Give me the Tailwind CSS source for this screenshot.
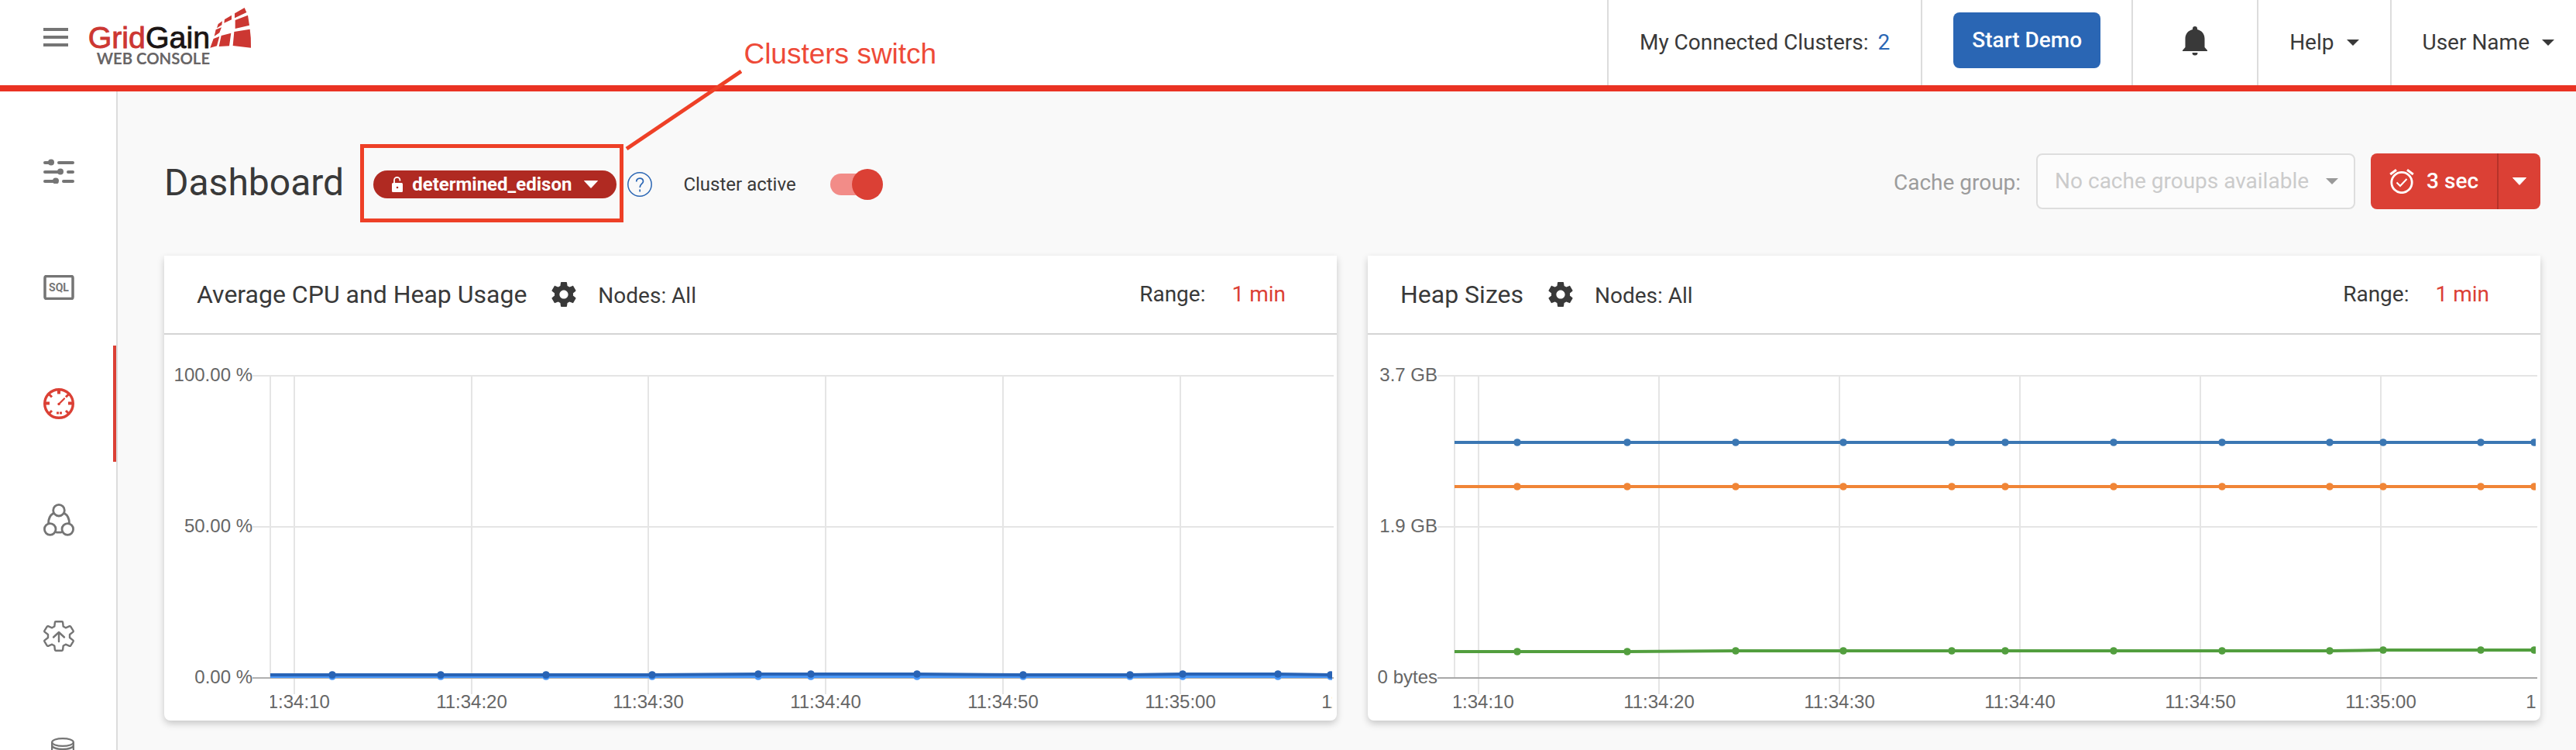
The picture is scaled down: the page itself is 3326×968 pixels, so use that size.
<!DOCTYPE html>
<html lang="en">
<head>
<meta charset="utf-8">
<title>GridGain Web Console</title>
<script src="https://cdn.jsdelivr.net/npm/@tailwindcss/browser@4"></script>
</head>
<body class="bg-[#f9f9f9]">
<div class="relative flex h-screen flex-col overflow-hidden bg-[#f9f9f9] font-['Roboto',sans-serif] text-[28px] leading-9 text-[#393939]">

<header class="flex h-[118px] shrink-0 justify-between border-b-8 border-[#ea3223] bg-white">
  <div class="flex h-24 items-center gap-[26px] pl-14">
    <button type="button" aria-label="Toggle menu" class="flex w-8 flex-col gap-1.5">
      <span class="h-1 bg-[#757575]"></span><span class="h-1 bg-[#757575]"></span><span class="h-1 bg-[#757575]"></span>
    </button>
    <a href="#" aria-label="GridGain Web Console">
      <svg class="h-[76px] w-[210px] overflow-visible" viewBox="42 30 630 228">
        <text x="41" y="185" font-family="Liberation Sans, sans-serif" font-size="118" stroke-width="2.500"><tspan fill="#cc3732" stroke="#cc3732">Grid</tspan><tspan fill="#1a1414" stroke="#1a1414">Gain</tspan></text>
        <text x="74" y="249" font-family="Lato, sans-serif" font-weight="700" font-size="61" fill="#686566">WEB CONSOLE</text>
        <path fill="#cc3732" d="M609 52 647 30 655 48 609 70zM570 75 597 59V76L568 89zM545 93 561 82 559 97 540 109zM611 78 660 59 666 98 611 111zM536 115 558 106 550 127 530 140zM527 150 550 141 540 178 514 185zM557 138 595 128 588 178 548 180zM607 123 668 113Q673 145 672 185L602 177z"/>
      </svg>
    </a>
  </div>
  <div class="flex">
    <div class="flex items-center gap-3 border-l-2 border-[#dcdcdc] px-10">
      <span>My Connected Clusters:</span><a href="#" class="text-[#2a66b4]">2</a>
    </div>
    <div class="border-l-2 border-[#dcdcdc] px-10 pt-4">
      <button type="button" class="h-18 rounded-lg bg-[#2a66b4] px-6 font-medium text-white">Start Demo</button>
    </div>
    <div class="flex items-center border-l-2 border-[#dcdcdc] px-16 pb-1">
      <button type="button" aria-label="Notifications">
        <svg class="h-[38px] w-8" viewBox="0 0 32 38" fill="#393939"><path d="M16 0a3 3 0 0 1 3 3v1c6 1.500 9.500 6 9.500 12v11l3.500 4v1H0v-1l3.500-4V16C3.500 10 7 5.500 13 4V3a3 3 0 0 1 3-3zM12.500 34h7a3.500 3.500 0 0 1-7 0z"/></svg>
      </button>
    </div>
    <div class="flex items-center border-l-2 border-[#dcdcdc] px-10">
      <button type="button" class="flex items-center gap-4">Help
        <svg class="h-2 w-4" viewBox="0 0 16 8" fill="#393939"><path d="M0 0H16L8 8z"/></svg>
      </button>
    </div>
    <div class="flex items-center border-l-2 border-[#dcdcdc] pr-7 pl-10">
      <button type="button" class="flex items-center gap-4">User Name
        <svg class="h-2 w-4" viewBox="0 0 16 8" fill="#393939"><path d="M0 0H16L8 8z"/></svg>
      </button>
    </div>
  </div>
</header>

<div class="flex min-h-0 flex-1">
  <nav aria-label="Main" class="flex w-[152px] shrink-0 flex-col overflow-hidden border-r-2 border-[#dcdcdc] bg-white pt-7 text-[#757575]">
    <a href="#" aria-label="Configuration" class="flex h-[150px] shrink-0 items-center pl-14">
      <svg class="h-8 w-10" viewBox="0 0 40 32" fill="currentColor" stroke="currentColor" stroke-width="4" stroke-linecap="round"><path d="M2 5H10M20 5H38M2 17H22M32 17H38M2 29H16M26 29H38"/><g stroke="none"><circle cx="10" cy="4.500" r="4"/><circle cx="22" cy="16.500" r="4"/><circle cx="16" cy="28.500" r="4"/></g></svg>
    </a>
    <a href="#" aria-label="Queries" class="flex h-[150px] shrink-0 items-center pl-14">
      <svg class="h-8 w-10" viewBox="0 0 40 32"><rect x="2" y="1.500" width="36" height="29" rx="2" fill="none" stroke="currentColor" stroke-width="3.500"/><text x="20" y="21" text-anchor="middle" font-family="Roboto, sans-serif" font-size="14" font-weight="700" fill="currentColor">SQL</text></svg>
    </a>
    <a href="#" aria-label="Dashboard" aria-current="page" class="flex h-[150px] shrink-0 items-center border-r-4 border-[#db4035] pl-14 text-[#db4035]">
      <svg class="h-10 w-10" viewBox="0 0 40 40" fill="none" stroke="currentColor"><circle cx="20" cy="20" r="18.300" stroke-width="3.400"/><path stroke-width="4" d="M20 3V7.500M3 19.500H8M32 19.500H37"/><path stroke-width="3" d="M7.500 8 11 11.500M32.500 8 29 11.500M7.500 32.500 11 29M32.500 32.500 29 29"/><path stroke-width="2.200" stroke-linecap="round" d="M20 20.500 27 13.500"/><circle cx="20" cy="20.500" r="1" stroke-width="1.500" fill="currentColor"/><path stroke-width="3" d="M17 32H20M21 32H24"/></svg>
    </a>
    <a href="#" aria-label="Topology" class="flex h-[150px] shrink-0 items-center pl-14">
      <svg class="h-[42px] w-10" viewBox="0 0 40 42" fill="none" stroke="currentColor" stroke-width="2.800"><circle cx="20" cy="8.700" r="7.300"/><circle cx="8.700" cy="33" r="7.300"/><circle cx="31.300" cy="33" r="7.300"/><path d="M13.500 12C8.500 15 6.300 20 6.500 26M26.500 12C31.500 15 33.700 20 33.500 26M15 36.500 17.500 37.200H22.500L25 36.500"/></svg>
    </a>
    <a href="#" aria-label="Deployment" class="flex h-[150px] shrink-0 items-center pl-14">
      <svg class="h-10 w-10" viewBox="0 0 40 40" fill="none" stroke="currentColor" stroke-width="2.400" stroke-linejoin="round" stroke-linecap="round"><path d="M16 1.300H24Q25 1.300 25.100 2.300L25.700 7.500 28.800 9.300 33.800 7.200Q34.700 6.900 35.200 7.700L38.600 13.200Q39 14 38.300 14.600L34 18V22L38.300 25.400Q39 26 38.600 26.800L35.200 32.300Q34.700 33.100 33.800 32.800L28.800 30.700 25.700 32.500 25.100 37.700Q25 38.700 24 38.700H16Q15 38.700 14.900 37.700L14.300 32.500 11.200 30.700 6.200 32.800Q5.300 33.100 4.800 32.300L1.400 26.800Q1 26 1.700 25.400L6 22V18L1.700 14.600Q1 14 1.400 13.200L4.800 7.700Q5.300 6.900 6.200 7.200L11.200 9.300 14.300 7.500 14.900 2.300Q15 1.300 16 1.300z"/><path d="M20 27V15M13 21.500 20 15 27 21.500"/></svg>
    </a>
    <a href="#" aria-label="Storage" class="flex h-[150px] shrink-0 items-center pl-14">
      <svg class="h-[38px] w-10" viewBox="0 0 40 38" fill="none" stroke="currentColor" stroke-width="2.200"><ellipse cx="25" cy="6" rx="13.900" ry="4.900"/><path d="M11.100 6V32C11.100 38.500 38.900 38.500 38.900 32V6M11.100 10C12 16.500 38 16.500 38.900 10"/></svg>
    </a>
  </nav>

  <main class="flex min-w-0 flex-1 flex-col pt-20 pr-[46px] pl-[60px]">
    <div class="flex h-18 shrink-0 items-center justify-between">
      <div class="flex items-center gap-[38px] pt-1">
        <h1 class="text-[48px] leading-14">Dashboard</h1>
        <div class="flex items-center pt-1 text-[24px] leading-9">
          <div class="relative">
            <button type="button" class="flex h-9 items-center rounded-full bg-[#b02a22] px-6 font-bold text-white">
              <svg class="mr-3 h-5 w-[14px]" viewBox="0 0 14 20"><path d="M3 9V4.500a3.700 3.700 0 0 1 7.400 0V5.500" fill="none" stroke="#fff" stroke-width="1.800"/><rect y="8" width="14" height="12" rx="1.500" fill="#fff"/><circle cx="7" cy="14" r="1.300" fill="#b02a22"/></svg>
              <span>determined_edison</span>
              <svg class="ml-4 h-[10px] w-[18px]" viewBox="0 0 18 10" fill="#fff" stroke="#fff" stroke-linejoin="round"><path d="M.5.5H17.500L9 9.500z"/></svg>
            </button>
            <div class="pointer-events-none absolute -top-[34px] -right-[9px] -bottom-[31px] -left-[17px] border-5 border-[#ee4027]">
              <svg class="absolute -top-[103px] left-full h-[106px] w-[158px]" viewBox="0 0 158 106"><path d="M9 104 157 4" stroke="#ee4027" stroke-width="5"/></svg>
              <span class="absolute -top-[141px] left-full pl-40 font-['Liberation_Sans',sans-serif] text-[37px] leading-10 whitespace-nowrap text-[#ee4a38]">Clusters switch</span>
            </div>
          </div>
          <button type="button" aria-label="Help about clusters" class="ml-[14px]">
            <svg class="block h-8 w-8" viewBox="0 0 32 32" fill="none" stroke="#2a66b4" stroke-width="1.500"><circle cx="16" cy="16" r="15.200"/><path stroke-width="1.700" d="M11.700 12.500C11.700 6.700 20.500 6.700 20.500 12 20.500 15.500 16.200 15 16.200 20M16.200 22.500V25.500"/></svg>
          </button>
          <label class="relative ml-10 flex cursor-pointer items-center gap-11">Cluster active
            <input type="checkbox" checked class="peer sr-only">
            <span class="flex h-7 w-[62px] items-center rounded-full bg-[#f28c88]"><span class="ml-7 h-10 w-10 shrink-0 rounded-full bg-[#db4035]"></span></span>
          </label>
        </div>
      </div>
      <div class="flex items-center">
        <label for="cache" class="pt-1 pr-5 text-[#9c9c9c]">Cache group:</label>
        <div class="relative">
          <select id="cache" disabled class="h-18 w-[412px] appearance-none rounded-lg border-2 border-[#dedede] bg-[#fcfcfc] pl-[22px] text-[#cbcbcb] opacity-100"><option>No cache groups available</option></select>
          <svg class="pointer-events-none absolute top-8 right-[22px] h-2 w-4" viewBox="0 0 16 8" fill="#999"><path d="M0 0H16L8 8z"/></svg>
        </div>
        <div class="ml-5 flex h-18 overflow-hidden rounded-lg bg-[#db4035] text-white">
          <button type="button" class="flex items-center gap-4 border-r-2 border-[#b63229] px-6 font-medium">
            <svg class="h-8 w-8" viewBox="0 0 32 32" fill="none" stroke="#fff"><circle cx="16" cy="17.500" r="13.200" stroke-width="2.800"/><path stroke-width="3" d="M1.200 7 9 1.200M30.800 7 23 1.200"/><path stroke-width="2" d="M9.500 17.500 14 22 22.500 13"/></svg>3 sec
          </button>
          <button type="button" aria-label="Refresh options" class="px-[18px]">
            <svg class="h-[10px] w-[18px]" viewBox="0 0 18 10" fill="#fff" stroke="#fff" stroke-linejoin="round"><path d="M.5.5H17.500L9 9.500z"/></svg>
          </button>
        </div>
      </div>
    </div>

    <div class="mt-[60px] grid shrink-0 grid-cols-2 gap-10">
      <section class="rounded-b-lg bg-white shadow-[0_4px_10px_rgba(0,0,0,0.2)]">
        <div class="flex h-[102px] items-center border-b-2 border-[#d4d4d4] pr-[66px] pl-[42px]">
          <h2 class="text-[32px] leading-10">Average CPU and Heap Usage</h2>
          <button type="button" aria-label="Chart settings" class="ml-8"><svg class="block h-8 w-8" viewBox="2 2 20 20" fill="#393939"><path d="M19.430 12.980c.04-.32.07-.64.07-.98s-.03-.66-.07-.98l2.110-1.650c.19-.15.24-.42.12-.64l-2-3.460c-.12-.22-.39-.3-.61-.22l-2.490 1c-.52-.4-1.080-.73-1.690-.98l-.38-2.650C14.460 2.180 14.250 2 14 2h-4c-.25 0-.46.18-.49.42l-.38 2.650c-.61.25-1.170.59-1.690.98l-2.490-1c-.23-.09-.49 0-.61.22l-2 3.460c-.13.22-.07.49.12.64l2.110 1.650c-.04.32-.07.65-.07.98s.03.66.07.98l-2.110 1.650c-.19.15-.24.42-.12.64l2 3.460c.12.22.39.3.61.22l2.490-1c.52.4 1.080.73 1.690.98l.38 2.650c.03.24.24.42.49.42h4c.25 0 .46-.18.49-.42l.38-2.650c.61-.25 1.170-.59 1.690-.98l2.490 1c.23.09.49 0 .61-.22l2-3.460c.12-.22.07-.49-.12-.64l-2.110-1.650zM12 15.500c-1.930 0-3.500-1.570-3.500-3.500s1.570-3.500 3.500-3.500 3.500 1.570 3.500 3.500-1.570 3.500-3.500 3.500z"/></svg></button>
          <span class="ml-7 pt-1">Nodes: All</span>
          <span class="ml-auto">Range:</span>
          <button type="button" class="ml-[34px] text-[#db4035]">1 min</button>
        </div>
        <svg class="block h-auto w-full" viewBox="0 0 1514 498" font-family="Liberation Sans, sans-serif" font-size="24" fill="#666">
          <defs>
            <clipPath id="cpuClip"><rect x="137" y="0" width="1371" height="498"/></clipPath>
            <marker id="dark" markerUnits="userSpaceOnUse" markerWidth="10" markerHeight="10" refX="5" refY="5"><circle cx="5" cy="5" r="4.800" fill="#2863b5"/></marker>
            <marker id="light" markerUnits="userSpaceOnUse" markerWidth="10" markerHeight="10" refX="5" refY="5"><circle cx="5" cy="5" r="4.800" fill="#4a98f8"/></marker>
          </defs>
          <path d="M114 53H1510M114 248H1510M137 53V443M168 53V464M397 53V464M625 53V464M854 53V464M1083 53V464M1312 53V464" fill="none" stroke="#000" stroke-opacity=".1" stroke-width="2"/>
          <path d="M114 443H1510" stroke="#b0b0b0" stroke-width="2"/>
          <g text-anchor="end"><text x="114" y="60">100.00 %</text><text x="114" y="255">50.00 %</text><text x="114" y="450">0.00 %</text></g>
          <g clip-path="url(#cpuClip)">
            <g text-anchor="middle"><text x="168" y="482">11:34:10</text><text x="397" y="482">11:34:20</text><text x="625" y="482">11:34:30</text><text x="854" y="482">11:34:40</text><text x="1083" y="482">11:34:50</text><text x="1312" y="482">11:35:00</text><text x="1540" y="482">11:35:10</text></g>
            <polyline fill="none" stroke="#4a98f8" stroke-width="4" marker-mid="url(#light)" points="137,441 217,441 357,441 493,441 630,441 767,441 835,441 972,441 1109,441 1247,441 1315,441 1438,441 1506,441 1520,441"/>
            <polyline fill="none" stroke="#2863b5" stroke-width="4" marker-mid="url(#dark)" points="137,439 217,439 357,439 493,439 630,439 767,438 835,438 972,438 1109,439 1247,439 1315,438 1438,438 1506,439 1520,439"/>
          </g>
        </svg>
      </section>

      <section class="rounded-b-lg bg-white shadow-[0_4px_10px_rgba(0,0,0,0.2)]">
        <div class="flex h-[102px] items-center border-b-2 border-[#d4d4d4] pr-[66px] pl-[42px]">
          <h2 class="text-[32px] leading-10">Heap Sizes</h2>
          <button type="button" aria-label="Chart settings" class="ml-8"><svg class="block h-8 w-8" viewBox="2 2 20 20" fill="#393939"><path d="M19.430 12.980c.04-.32.07-.64.07-.98s-.03-.66-.07-.98l2.110-1.650c.19-.15.24-.42.12-.64l-2-3.460c-.12-.22-.39-.3-.61-.22l-2.490 1c-.52-.4-1.080-.73-1.690-.98l-.38-2.650C14.460 2.180 14.250 2 14 2h-4c-.25 0-.46.18-.49.42l-.38 2.650c-.61.25-1.170.59-1.690.98l-2.490-1c-.23-.09-.49 0-.61.22l-2 3.460c-.13.22-.07.49.12.64l2.110 1.650c-.04.32-.07.65-.07.98s.03.66.07.98l-2.110 1.650c-.19.15-.24.42-.12.64l2 3.460c.12.22.39.3.61.22l2.490-1c.52.4 1.080.73 1.690.98l.38 2.650c.03.24.24.42.49.42h4c.25 0 .46-.18.49-.42l.38-2.650c.61-.25 1.170-.59 1.690-.98l2.490 1c.23.09.49 0 .61-.22l2-3.460c.12-.22.07-.49-.12-.64l-2.110-1.650zM12 15.500c-1.930 0-3.500-1.570-3.500-3.500s1.570-3.500 3.500-3.500 3.500 1.570 3.500 3.500-1.570 3.500-3.500 3.500z"/></svg></button>
          <span class="ml-7 pt-1">Nodes: All</span>
          <span class="ml-auto">Range:</span>
          <button type="button" class="ml-[34px] text-[#db4035]">1 min</button>
        </div>
        <svg class="block h-auto w-full" viewBox="0 0 1514 498" font-family="Liberation Sans, sans-serif" font-size="24" fill="#666">
          <defs>
            <clipPath id="heapClip"><rect x="111" y="0" width="1397" height="498"/></clipPath>
            <marker id="blue" markerUnits="userSpaceOnUse" markerWidth="10" markerHeight="10" refX="5" refY="5"><circle cx="5" cy="5" r="4.800" fill="#3b77b3"/></marker>
            <marker id="orange" markerUnits="userSpaceOnUse" markerWidth="10" markerHeight="10" refX="5" refY="5"><circle cx="5" cy="5" r="4.800" fill="#f08536"/></marker>
            <marker id="green" markerUnits="userSpaceOnUse" markerWidth="10" markerHeight="10" refX="5" refY="5"><circle cx="5" cy="5" r="4.800" fill="#529e3e"/></marker>
          </defs>
          <path d="M90 53H1510M90 248H1510M112 53V443M143 53V464M376 53V464M609 53V464M842 53V464M1075 53V464M1308 53V464" fill="none" stroke="#000" stroke-opacity=".1" stroke-width="2"/>
          <path d="M90 443H1510" stroke="#a8a8a8" stroke-width="2"/>
          <g text-anchor="end"><text x="90" y="60">3.7 GB</text><text x="90" y="255">1.9 GB</text><text x="90" y="450">0 bytes</text></g>
          <g clip-path="url(#heapClip)">
            <g text-anchor="middle"><text x="143" y="482">11:34:10</text><text x="376" y="482">11:34:20</text><text x="609" y="482">11:34:30</text><text x="842" y="482">11:34:40</text><text x="1075" y="482">11:34:50</text><text x="1308" y="482">11:35:00</text><text x="1541" y="482">11:35:10</text></g>
            <polyline fill="none" stroke="#3b77b3" stroke-width="4" marker-mid="url(#blue)" points="112,139 193,139 335,139 475,139 614,139 754,139 823,139 963,139 1103,139 1242,139 1311,139 1437,139 1506,139 1520,139"/>
            <polyline fill="none" stroke="#f08536" stroke-width="4" marker-mid="url(#orange)" points="112,196 193,196 335,196 475,196 614,196 754,196 823,196 963,196 1103,196 1242,196 1311,196 1437,196 1506,196 1520,196"/>
            <polyline fill="none" stroke="#529e3e" stroke-width="4" marker-mid="url(#green)" points="112,409 193,409 335,409 475,408 614,408 754,408 823,408 963,408 1103,408 1242,408 1311,407 1437,407 1506,407 1520,407"/>
          </g>
        </svg>
      </section>
    </div>
  </main>
</div>
</div>
</body>
</html>
